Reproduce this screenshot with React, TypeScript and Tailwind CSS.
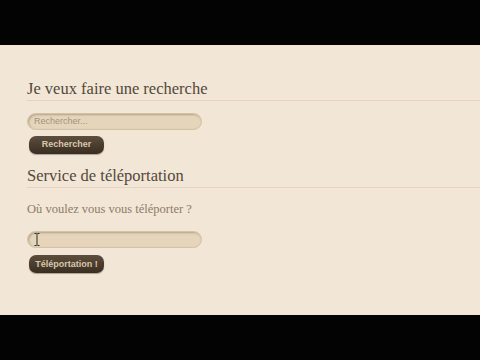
export default function App() {
  return (
    <div className="w-[480px] h-[360px] flex flex-col bg-black">
      <div className="h-[45px] bg-[#030303]" />
      <main className="h-[270px] bg-[#f2e6d6] pl-[27px] pt-[34px] font-['Liberation_Serif',serif]">
        {/* Recherche */}
        <h2 className="text-[16.5px] leading-[20px] text-[#54483b] pb-[1px] border-b border-[#e2d5c2]">
          Je veux faire une recherche
        </h2>
        <div className="mt-[12px] w-[175px] h-[17px] rounded-full bg-[#e5d5bb] border border-[#d3c2a6] shadow-[inset_1px_1px_2px_rgba(90,70,40,0.35)] flex items-center pl-[6px]">
          <span className="font-['Liberation_Sans',sans-serif] text-[9px] text-[#a39380]">Rechercher...</span>
        </div>
        <button className="mt-[6px] ml-[2px] w-[75px] h-[18px] rounded-[7px] bg-gradient-to-b from-[#5e4e3c] to-[#3a2e22] shadow-[0_1px_1px_rgba(0,0,0,0.3)] font-['Liberation_Sans',sans-serif] text-[9px] font-bold text-[#d8c7ad]">
          Rechercher
        </button>

        {/* Téléportation */}
        <h2 className="mt-[12px] text-[16.5px] leading-[20px] text-[#54483b] pb-[1px] border-b border-[#e2d5c2]">
          Service de téléportation
        </h2>
        <p className="mt-[13px] text-[12.5px] leading-[16px] text-[#8c7c69]">Où voulez vous vous téléporter ?</p>
        <div className="relative mt-[14px] w-[175px] h-[17px] rounded-full bg-[#e5d5bb] border border-[#d3c2a6] shadow-[inset_1px_1px_2px_rgba(90,70,40,0.35)]">
          <svg className="absolute left-[6px] top-[1px]" width="6" height="13" viewBox="0 0 6 13">
            <path d="M0.5 0.5h2M3.5 0.5h2M3 0.5v12M0.5 12.5h2M3.5 12.5h2" stroke="#2a2a2a" strokeWidth="1" fill="none" />
          </svg>
        </div>
        <button className="mt-[7px] ml-[2px] w-[75px] h-[18px] rounded-[7px] bg-gradient-to-b from-[#5e4e3c] to-[#3a2e22] shadow-[0_1px_1px_rgba(0,0,0,0.3)] font-['Liberation_Sans',sans-serif] text-[9px] font-bold text-[#d8c7ad]">
          Téléportation !
        </button>
      </main>
      <div className="flex-1 bg-[#030303]" />
    </div>
  );
}
